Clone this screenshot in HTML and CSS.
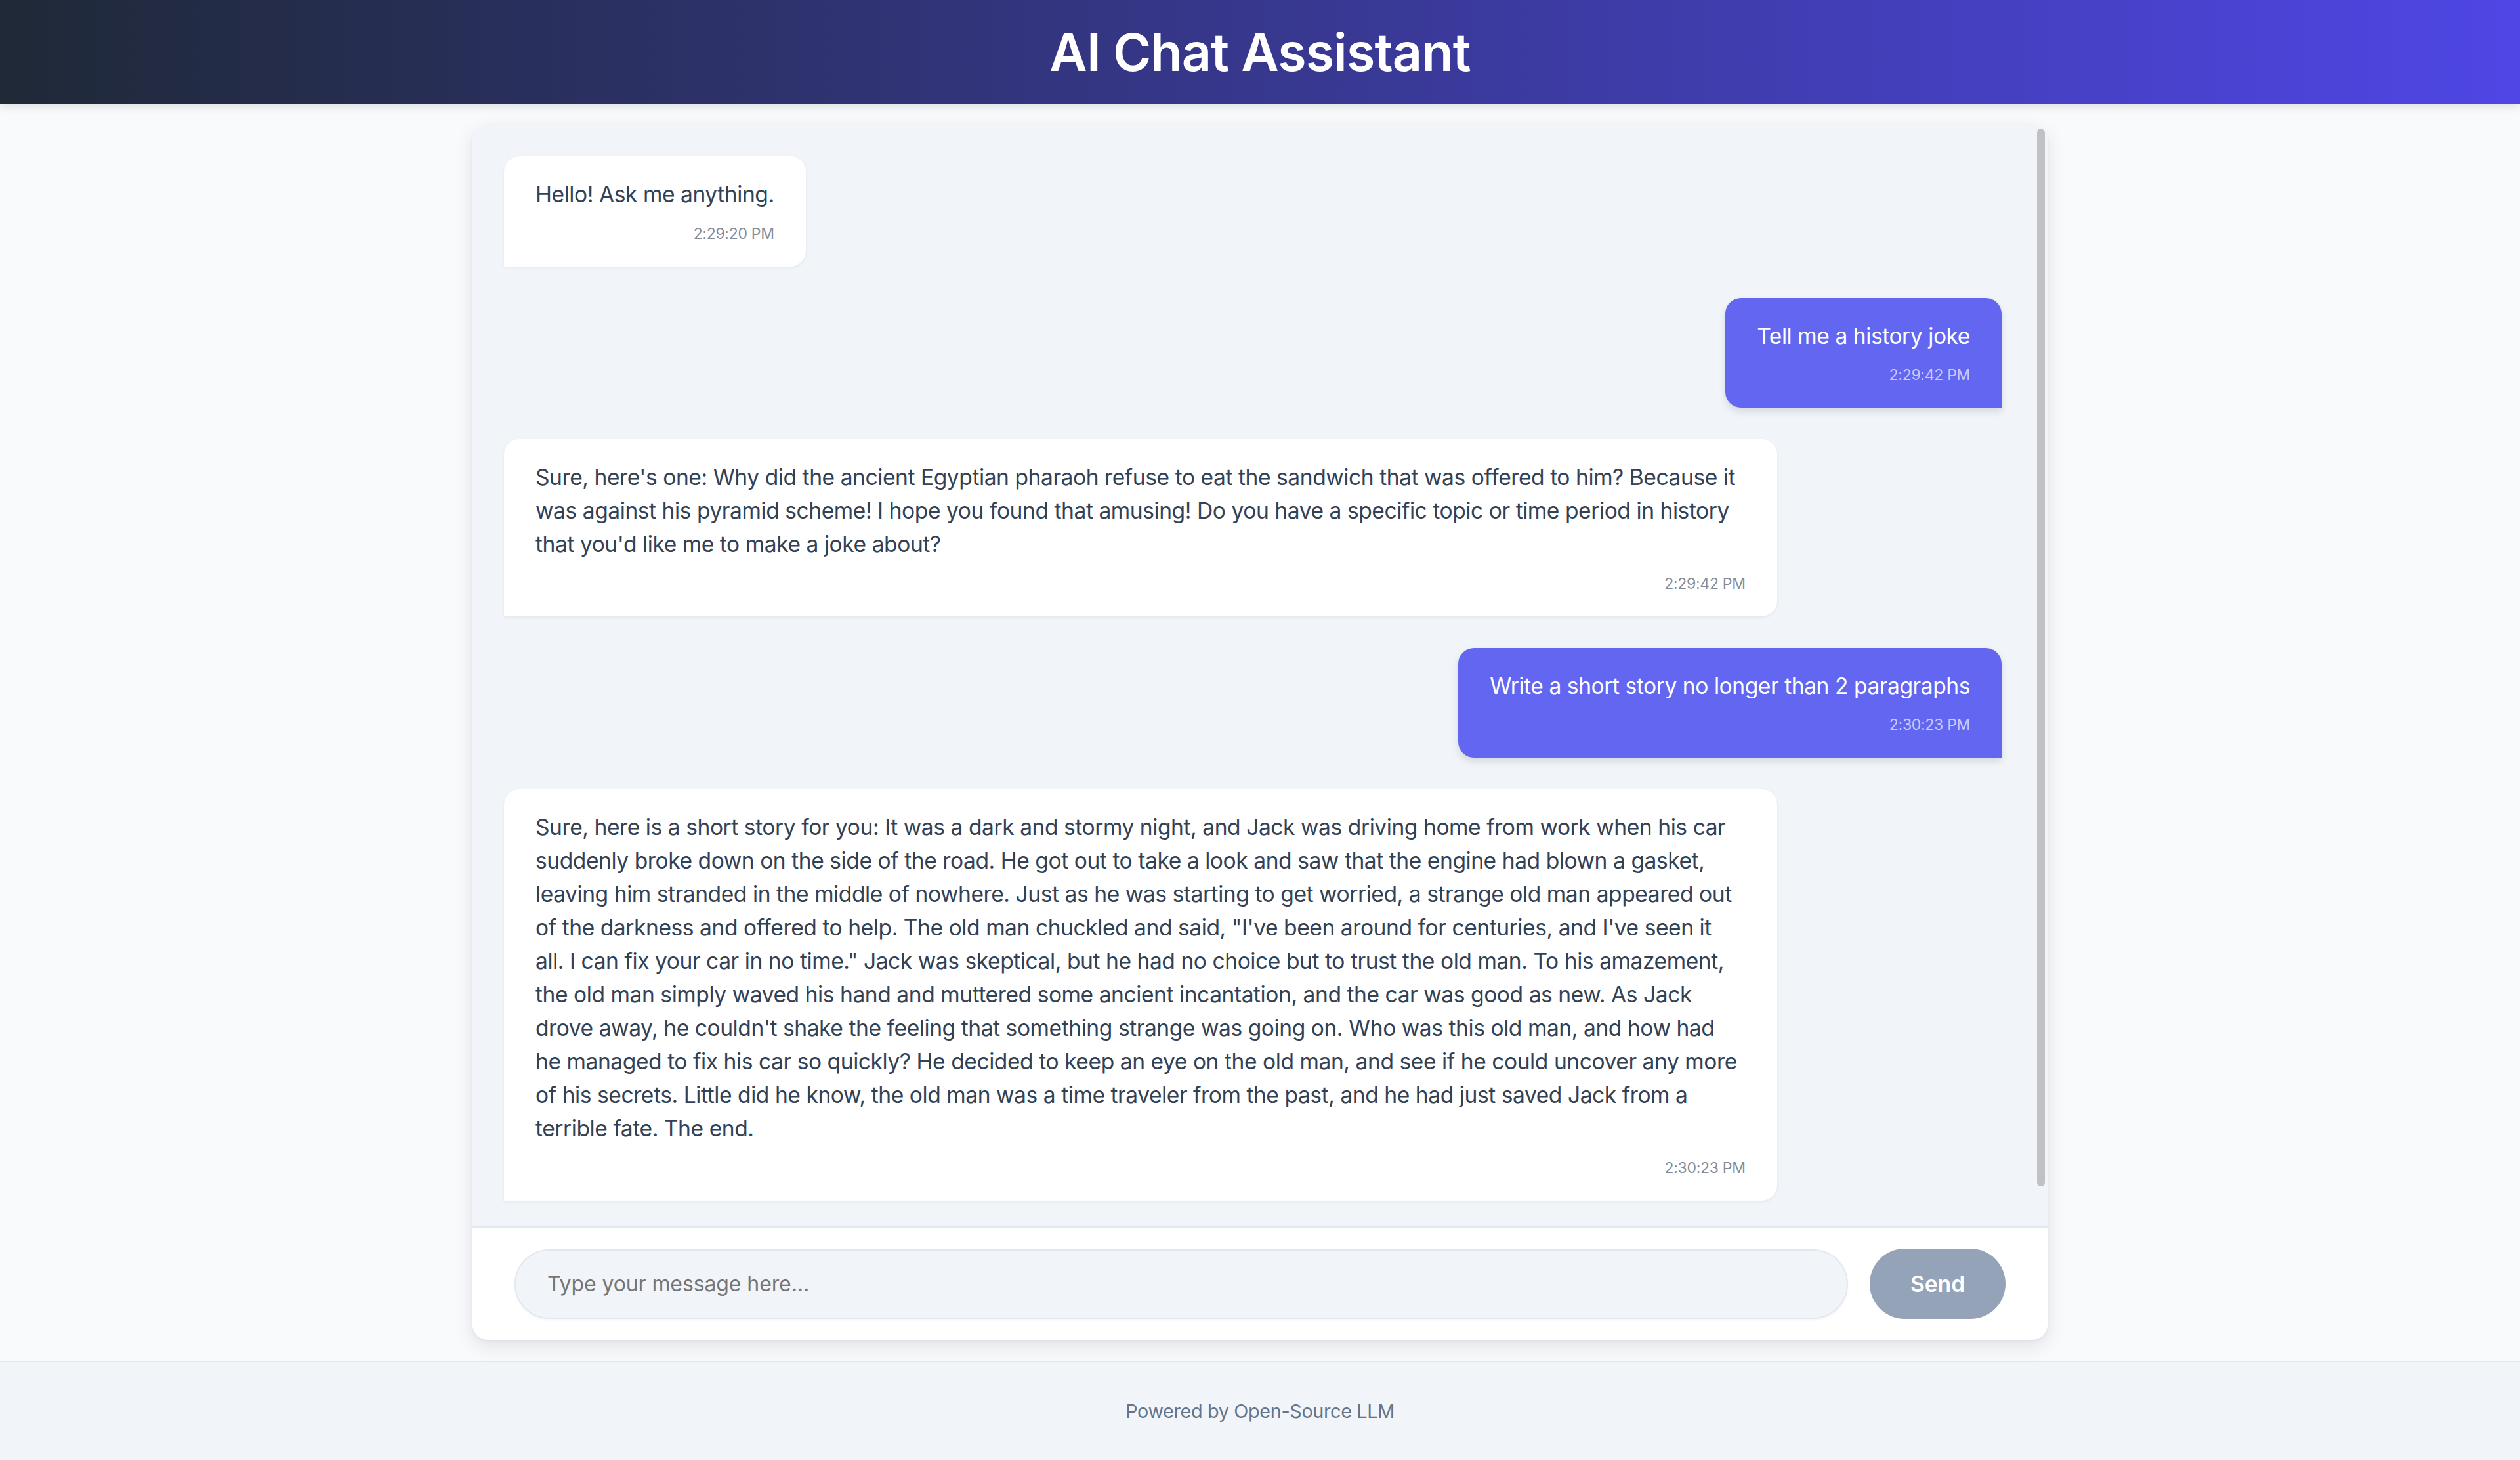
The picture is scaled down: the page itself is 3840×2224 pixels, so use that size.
FILE: index.html
```html
<!DOCTYPE html>
<html lang="en">
<head>
<meta charset="utf-8">
<title>AI Chat Assistant</title>
<link rel="stylesheet" href="styles.css">
</head>
<body>
<header class="app-header">
  <h1 class="app-title">AI Chat Assistant</h1>
</header>
<main class="app-main">
  <section class="chat">
    <div class="messages">
      <div class="row bot">
        <div class="bubble">
          <div class="text">Hello! Ask me anything.</div>
          <div class="time">2:29:20 PM</div>
        </div>
      </div>
      <div class="row user">
        <div class="bubble">
          <div class="text">Tell me a history joke</div>
          <div class="time">2:29:42 PM</div>
        </div>
      </div>
      <div class="row bot">
        <div class="bubble">
          <div class="text">Sure, here's one: Why did the ancient Egyptian pharaoh refuse to eat the sandwich that was offered to him? Because it was against his pyramid scheme! I hope you found that amusing! Do you have a specific topic or time period in history that you'd like me to make a joke about?</div>
          <div class="time">2:29:42 PM</div>
        </div>
      </div>
      <div class="row user">
        <div class="bubble">
          <div class="text">Write a short story no longer than 2 paragraphs</div>
          <div class="time">2:30:23 PM</div>
        </div>
      </div>
      <div class="row bot">
        <div class="bubble">
          <div class="text">Sure, here is a short story for you: It was a dark and stormy night, and Jack was driving home from work when his car suddenly broke down on the side of the road. He got out to take a look and saw that the engine had blown a gasket, leaving him stranded in the middle of nowhere. Just as he was starting to get worried, a strange old man appeared out of the darkness and offered to help. The old man chuckled and said, "I've been around for centuries, and I've seen it all. I can fix your car in no time." Jack was skeptical, but he had no choice but to trust the old man. To his amazement, the old man simply waved his hand and muttered some ancient incantation, and the car was good as new. As Jack drove away, he couldn't shake the feeling that something strange was going on. Who was this old man, and how had he managed to fix his car so quickly? He decided to keep an eye on the old man, and see if he could uncover any more of his secrets. Little did he know, the old man was a time traveler from the past, and he had just saved Jack from a terrible fate. The end.</div>
          <div class="time">2:30:23 PM</div>
        </div>
      </div>
    </div>
    <div class="scroll-thumb"></div>
    <form class="composer">
      <input class="composer-input" type="text" placeholder="Type your message here...">
      <button class="composer-send" type="button">Send</button>
    </form>
  </section>
</main>
<footer class="app-footer">Powered by Open-Source LLM</footer>
</body>
</html>
```

FILE: styles.css
```css
* { box-sizing: border-box; }

html, body {
  margin: 0;
  height: 100%;
}

body {
  display: flex;
  flex-direction: column;
  height: 2224px;
  font-family: Inter, "Noto Sans", "Liberation Sans", sans-serif;
  background: #f8fafc;
  color: #334155;
}

.app-header {
  flex: 0 0 158px;
  display: flex;
  align-items: center;
  justify-content: center;
  background: linear-gradient(90deg, #1f2937 0%, #4f46e5 100%);
  box-shadow: 0 4px 14px rgba(0, 0, 0, 0.12);
  position: relative;
  z-index: 1;
}

.app-title {
  margin: 0;
  color: #ffffff;
  font-size: 79px;
  font-weight: 600;
  line-height: 1;
  letter-spacing: -0.9px;
}

.app-main {
  flex: 1 1 auto;
  min-height: 0;
  display: flex;
  justify-content: center;
  padding: 32px 0;
}

.chat {
  position: relative;
  width: 2400px;
  display: flex;
  flex-direction: column;
  background: #ffffff;
  border-radius: 24px;
  overflow: hidden;
  box-shadow: 0 10px 30px rgba(15, 23, 42, 0.10), 0 2px 6px rgba(15, 23, 42, 0.05);
}

.messages {
  flex: 1 1 auto;
  min-height: 0;
  overflow: hidden;
  background: #f1f5f9;
  padding: 48px 70px 96px 48px;
}

.scroll-thumb {
  position: absolute;
  top: 6px;
  right: 4px;
  width: 12px;
  height: 1611px;
  background: #c1c1c5;
  border-radius: 6px;
}

.row {
  display: flex;
  margin-bottom: 48px;
}
.row:last-child { margin-bottom: 0; }
.row.user { justify-content: flex-end; }
.row.bot { justify-content: flex-start; }

.bubble {
  max-width: 85%;
  padding: 32px 48px;
  border-radius: 24px;
  font-size: 33.6px;
  line-height: 51px;
  letter-spacing: -0.444px;
}

.bot .bubble {
  background: #ffffff;
  color: #334155;
  border-bottom-left-radius: 0;
  box-shadow: 0 2px 5px rgba(15, 23, 42, 0.06);
}

.user .bubble {
  background: #6366f1;
  color: #ffffff;
  border-bottom-right-radius: 0;
  box-shadow: 0 6px 12px rgba(15, 23, 42, 0.12);
}

.time {
  margin-top: 16.5px;
  font-size: 23px;
  line-height: 36px;
  letter-spacing: -0.3px;
  text-align: right;
}
.bot .time { color: #858b98; }
.user .time { color: rgba(255, 255, 255, 0.68); }

.composer {
  flex: 0 0 auto;
  margin: 0;
  display: flex;
  align-items: center;
  gap: 33px;
  padding: 32px 64px;
  background: #ffffff;
  border-top: 2.4px solid #e2e8f0;
}

.composer-input {
  flex: 1 1 auto;
  height: 106px;
  padding: 0 48px;
  border: 2.4px solid #e2e8f0;
  border-radius: 9999px;
  background: #f1f5f9;
  font-family: inherit;
  font-size: 32px;
  letter-spacing: -0.1px;
  color: #334155;
  outline: none;
  box-shadow: 0 2px 4px rgba(15, 23, 42, 0.04);
}
.composer-input::placeholder { color: #757575; }

.composer-send {
  flex: 0 0 207px;
  height: 107px;
  border: 0;
  border-radius: 9999px;
  background: #94a3b8;
  color: #ffffff;
  font-family: inherit;
  font-size: 33.6px;
  font-weight: 600;
}

.app-footer {
  flex: 0 0 151px;
  display: flex;
  align-items: center;
  justify-content: center;
  background: #f1f5f9;
  border-top: 2.4px solid #e2e8f0;
  color: #64748b;
  font-size: 28.8px;
  letter-spacing: -0.35px;
}
```
